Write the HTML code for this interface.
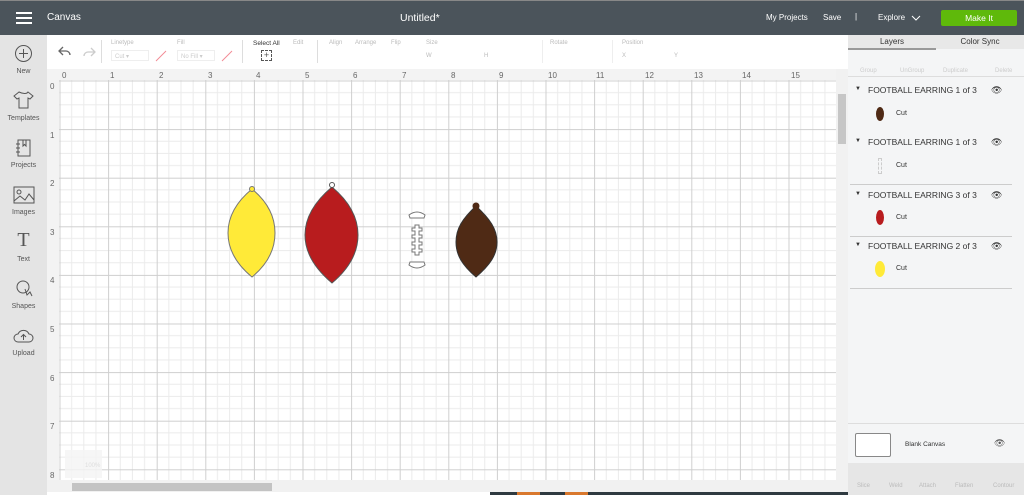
<!DOCTYPE html>
<html><head><meta charset="utf-8"><style>
*{margin:0;padding:0;box-sizing:border-box}
body{width:1024px;height:495px;overflow:hidden;font-family:"Liberation Sans",sans-serif;background:#fff;position:relative}
.top{position:absolute;left:0;top:0;width:1024px;height:35px;background:#4b545b;border-top:1px solid #888;color:#fff}
.abs{position:absolute}
.side{position:absolute;left:0;top:35px;width:47px;height:460px;background:#e4e4e4}
.side div{position:absolute;width:47px;text-align:center;font-size:7px;color:#555}
.tb{position:absolute;left:47px;top:35px;width:801px;height:34px;background:#fff}
.lbl{position:absolute;font-size:6px;color:#bbb}
.rp{position:absolute;left:848px;top:35px;width:176px;height:460px;background:#f4f5f6}
.layer{position:absolute;left:0;width:163px;font-size:8.5px;color:#333}
.tabs{position:absolute;top:0;left:0;width:176px;height:14px;background:#e8e8e8;font-size:8px;color:#333}
</style></head><body>
<div class="top">
 <div class="abs" style="left:16px;top:11px;width:16px;height:2px;background:#fff;box-shadow:0 5px 0 #fff,0 10px 0 #fff"></div>
 <div class="abs" style="left:47px;top:11px;font-size:10px">Canvas</div>
 <div class="abs" style="left:400px;top:11px;font-size:10.5px">Untitled*</div>
 <div class="abs" style="left:766px;top:12px;font-size:8px">My Projects</div>
 <div class="abs" style="left:823px;top:12px;font-size:8px">Save</div>
 <div class="abs" style="left:855px;top:11px;font-size:8px">|</div>
 <div class="abs" style="left:878px;top:12px;font-size:8px">Explore</div>
 <svg class="abs" style="left:911px;top:14px" width="10" height="6"><path d="M1 1l4 4 4-4" stroke="#fff" fill="none"/></svg>
 <div class="abs" style="left:941px;top:9px;width:76px;height:16px;background:#5fb90b;border-radius:2px;font-size:8.5px;text-align:center;line-height:16px">Make It</div>
</div>
<div class="side">
 <svg class="abs" style="left:14px;top:9px" width="19" height="19"><circle cx="9.5" cy="9.5" r="8" stroke="#555" fill="none"/><path d="M9.5 5v9M5 9.5h9" stroke="#555"/></svg>
 <div style="top:33px">New</div>
 <svg class="abs" style="left:13px;top:56px" width="21" height="18"><path d="M6 1l-5 4 3 3 2-1v10h9V7l2 1 3-3-5-4c-1 2-5 2-9 0z" stroke="#555" fill="none"/></svg>
 <div style="top:80px">Templates</div>
 <svg class="abs" style="left:15px;top:104px" width="17" height="18"><rect x="3" y="1" width="12" height="16" stroke="#555" fill="none"/><path d="M1 5h4M1 9h4M1 13h4M11 1v6l-1.5-1.5L8 7V1" stroke="#555" fill="none"/></svg>
 <div style="top:127px">Projects</div>
 <svg class="abs" style="left:13px;top:151px" width="22" height="18"><rect x="1" y="1" width="20" height="16" stroke="#555" fill="none"/><circle cx="6" cy="6" r="2" stroke="#555" fill="none"/><path d="M1 15l6-5 5 4 4-6 5 6" stroke="#555" fill="none"/></svg>
 <div style="top:174px">Images</div>
 <div style="top:194px;font-size:20px;font-family:'Liberation Serif',serif;color:#555">T</div>
 <div style="top:221px">Text</div>
 <svg class="abs" style="left:15px;top:245px" width="18" height="18"><circle cx="8" cy="7" r="6" stroke="#555" fill="none"/><path d="M10 9l2 6 3-3 2 4" stroke="#555" fill="none"/></svg>
 <div style="top:268px">Shapes</div>
 <svg class="abs" style="left:13px;top:293px" width="21" height="16"><path d="M5 14a4 4 0 0 1 0-8 6 6 0 0 1 11 0 4 4 0 0 1 0 8z" stroke="#555" fill="none"/><path d="M10.5 12V7M8 9l2.5-2.5L13 9" stroke="#555" fill="none"/></svg>
 <div style="top:315px">Upload</div>
</div>
<div class="tb">
 <svg class="abs" style="left:10px;top:9px" width="40" height="14"><path d="M6 3L2 7l4 4M2 7h7a4 4 0 0 1 4 4" stroke="#666" fill="none" stroke-width="1.3"/><path d="M34 4l4 4-4 4M38 8h-7a4 4 0 0 0-4 4" stroke="#ccc" fill="none" stroke-width="1.3"/></svg>
 <div class="abs" style="left:54px;top:5px;width:1px;height:23px;background:#ddd"></div>
 <div class="lbl" style="left:64px;top:5px">Linetype</div>
 <div class="abs" style="left:64px;top:15px;width:38px;height:11px;border:1px solid #eee;font-size:6px;color:#ccc;padding:2px 3px">Cut ▾</div>
 <svg class="abs" style="left:108px;top:15px" width="12" height="12"><path d="M1 11L11 1" stroke="#f28b95"/></svg>
 <div class="lbl" style="left:130px;top:5px">Fill</div>
 <div class="abs" style="left:130px;top:15px;width:38px;height:11px;border:1px solid #eee;font-size:6px;color:#ccc;padding:2px 3px">No Fill ▾</div>
 <svg class="abs" style="left:174px;top:15px" width="12" height="12"><path d="M1 11L11 1" stroke="#f28b95"/></svg>
 <div class="abs" style="left:195px;top:5px;width:1px;height:23px;background:#ddd"></div>
 <div class="abs" style="left:206px;top:5px;font-size:6.5px;color:#333">Select All</div>
 <div class="abs" style="left:214px;top:15px;width:11px;height:11px;border:1px dashed #555;font-size:9px;line-height:9px;text-align:center;color:#555">+</div>
 <div class="lbl" style="left:246px;top:5px">Edit</div>
 <div class="abs" style="left:270px;top:5px;width:1px;height:23px;background:#ddd"></div>
 <div class="lbl" style="left:282px;top:5px">Align</div>
 <div class="lbl" style="left:308px;top:5px">Arrange</div>
 <div class="lbl" style="left:344px;top:5px">Flip</div>
 <div class="lbl" style="left:379px;top:5px">Size</div>
 <div class="lbl" style="left:379px;top:18px">W</div>
 <div class="lbl" style="left:437px;top:18px">H</div>
 <div class="abs" style="left:495px;top:5px;width:1px;height:23px;background:#eee"></div>
 <div class="lbl" style="left:503px;top:5px">Rotate</div>
 <div class="abs" style="left:565px;top:5px;width:1px;height:23px;background:#eee"></div>
 <div class="lbl" style="left:575px;top:5px">Position</div>
 <div class="lbl" style="left:575px;top:18px">X</div>
 <div class="lbl" style="left:627px;top:18px">Y</div>
</div>
<svg class="abs" style="left:47px;top:69px" width="801" height="426">
 <defs>
  <pattern id="g" x="12.5" y="11.5" width="48.6" height="48.6" patternUnits="userSpaceOnUse">
   <path d="M12.15 0V48.6M24.3 0V48.6M36.45 0V48.6M0 12.15H48.6M0 24.3H48.6M0 36.45H48.6" stroke="#ebebeb" stroke-width="1"/>
   <path d="M0.5 0V48.6M0 0.5H48.6" stroke="#cfcfcf" stroke-width="1"/>
  </pattern>
 </defs>
 <rect x="0" y="0" width="801" height="426" fill="#fff"/>
 <rect x="12" y="11" width="777" height="400" fill="url(#g)"/>
 <rect x="0" y="0" width="789" height="11" fill="#f3f3f3"/>
 <rect x="0" y="0" width="12" height="411" fill="#f3f3f3"/>
 <g font-size="8" fill="#666" font-family="Liberation Sans">
  <text x="15" y="9">0</text><text x="63" y="9">1</text><text x="112" y="9">2</text><text x="161" y="9">3</text><text x="209" y="9">4</text><text x="258" y="9">5</text><text x="306" y="9">6</text><text x="355" y="9">7</text><text x="404" y="9">8</text><text x="452" y="9">9</text><text x="501" y="9">10</text><text x="549" y="9">11</text><text x="598" y="9">12</text><text x="647" y="9">13</text><text x="695" y="9">14</text><text x="744" y="9">15</text><text x="790" y="9" fill="#555">16</text>
  <text x="3" y="20">0</text><text x="3" y="69">1</text><text x="3" y="117">2</text><text x="3" y="166">3</text><text x="3" y="214">4</text><text x="3" y="263">5</text><text x="3" y="312">6</text><text x="3" y="360">7</text><text x="3" y="409">8</text>
 </g>
 <rect x="789" y="0" width="12" height="411" fill="#f1f1f1"/>
 <rect x="791" y="25" width="8" height="50" fill="#c6c6c6"/>
 <rect x="0" y="411" width="801" height="12" fill="#f1f1f1"/>
 <rect x="25" y="414" width="200" height="8" fill="#c3c3c3"/>
 <rect x="443" y="423" width="358" height="3" fill="#2f3a40"/>
 <rect x="470" y="423" width="23" height="3" fill="#d9782d"/><rect x="518" y="423" width="23" height="3" fill="#d9782d"/>
 <rect x="18" y="381" width="37" height="28" fill="#f4f4f4" opacity=".8"/>
 <text x="38" y="398" font-size="6" fill="#ddd">100%</text>
 <!-- yellow -->
 <path d="M205 120C188 134 181 149 181 164C181 179 188 194 205 208C222 194 228 179 228 164C228 149 222 134 205 120Z" fill="#ffea38" stroke="#777" stroke-width="1"/>
 <circle cx="205" cy="120" r="2.5" fill="#ffea38" stroke="#777"/>
 <!-- red -->
 <path d="M285 118C266 134 258 150 258 166C258 182 266 198 285 214C304 198 311 182 311 166C311 150 304 134 285 118Z" fill="#b81c1e" stroke="#555" stroke-width="1"/>
 <circle cx="285" cy="116" r="2.5" fill="#fff" stroke="#555"/>
 <!-- football lines -->
 <g stroke="#777" fill="#fff" stroke-width="1">
  <path d="M362 146Q370 140 378 146L377 149H363Z"/>
  <path d="M362 196Q370 202 378 196L377 193H363Z"/>
  <path d="M368 156h4v3h3v3h-3v4h3v3h-3v4h3v3h-3v4h3v3h-3v3h-4v-3h-3v-3h3v-4h-3v-3h3v-4h-3v-3h3v-4h-3v-3h3z"/>
 </g>
 <!-- brown -->
 <path d="M429 137C415 150 409 160 409 173C409 186 415 196 429 208C443 196 450 186 450 173C450 160 443 150 429 137Z" fill="#4f2a15" stroke="#333"/>
 <circle cx="429" cy="137" r="3.5" fill="#4f2a15"/>
</svg>
<div class="rp">
 <div class="tabs"><div class="abs" style="left:0;width:88px;text-align:center;top:2px">Layers</div><div class="abs" style="left:88px;width:88px;text-align:center;top:2px">Color Sync</div><div class="abs" style="left:0;top:13px;width:88px;height:2px;background:#999"></div></div>
 <div class="abs" style="top:15px;left:0;width:176px;height:27px;border-bottom:1px solid #ddd;font-size:6px;color:#ccc">
  <div class="abs" style="left:12px;top:18px">Group</div><div class="abs" style="left:52px;top:18px">UnGroup</div><div class="abs" style="left:95px;top:18px">Duplicate</div><div class="abs" style="left:147px;top:18px">Delete</div>
 </div>
 <div class="layer" style="top:50px">
  <div class="abs" style="left:7px;top:1px;font-size:6px">▼</div><div class="abs" style="left:20px">FOOTBALL EARRING 1 of 3</div><div class="abs" style="left:143px;font-size:9px">👁</div>
  <div class="abs" style="left:28px;top:22px;width:8px;height:14px;border-radius:50%;background:#4f2a15"></div><div class="abs" style="left:48px;top:25px;font-size:7px">Cut</div>
 </div>
 <div class="layer" style="top:102px">
  <div class="abs" style="left:7px;top:1px;font-size:6px">▼</div><div class="abs" style="left:20px">FOOTBALL EARRING 1 of 3</div><div class="abs" style="left:143px;font-size:9px">👁</div>
  <div class="abs" style="left:30px;top:21px;width:4px;height:16px;border:1px dashed #ccc"></div><div class="abs" style="left:48px;top:25px;font-size:7px">Cut</div>
 </div>
 <div class="abs" style="left:2px;top:149px;width:162px;height:1px;background:#ccc"></div>
 <div class="layer" style="top:155px">
  <div class="abs" style="left:7px;top:1px;font-size:6px">▼</div><div class="abs" style="left:20px">FOOTBALL EARRING 3 of 3</div><div class="abs" style="left:143px;font-size:9px">👁</div>
  <div class="abs" style="left:28px;top:20px;width:8px;height:15px;border-radius:50%;background:#b81c1e"></div><div class="abs" style="left:48px;top:24px;font-size:7px">Cut</div>
 </div>
 <div class="abs" style="left:2px;top:201px;width:162px;height:1px;background:#ccc"></div>
 <div class="layer" style="top:206px">
  <div class="abs" style="left:7px;top:1px;font-size:6px">▼</div><div class="abs" style="left:20px">FOOTBALL EARRING 2 of 3</div><div class="abs" style="left:143px;font-size:9px">👁</div>
  <div class="abs" style="left:27px;top:20px;width:10px;height:16px;border-radius:50%;background:#ffea38"></div><div class="abs" style="left:48px;top:24px;font-size:7px">Cut</div>
 </div>
 <div class="abs" style="left:2px;top:253px;width:162px;height:1px;background:#ccc"></div>
 <div class="abs" style="left:0;top:388px;width:176px;height:1px;background:#ddd"></div>
 <div class="abs" style="left:7px;top:398px;width:36px;height:24px;border:1px solid #888;background:#fff;border-radius:2px"></div>
 <div class="abs" style="left:57px;top:406px;font-size:6.5px;color:#333">Blank Canvas</div>
 <div class="abs" style="left:146px;top:403px;font-size:9px;color:#555">👁</div>
 <div class="abs" style="left:0;top:428px;width:176px;height:32px;background:#e6e6e6;font-size:6px;color:#bbb">
  <div class="abs" style="left:9px;top:20px">Slice</div><div class="abs" style="left:41px;top:20px">Weld</div><div class="abs" style="left:71px;top:20px">Attach</div><div class="abs" style="left:107px;top:20px">Flatten</div><div class="abs" style="left:145px;top:20px">Contour</div>
 </div>
</div>
</body></html>
